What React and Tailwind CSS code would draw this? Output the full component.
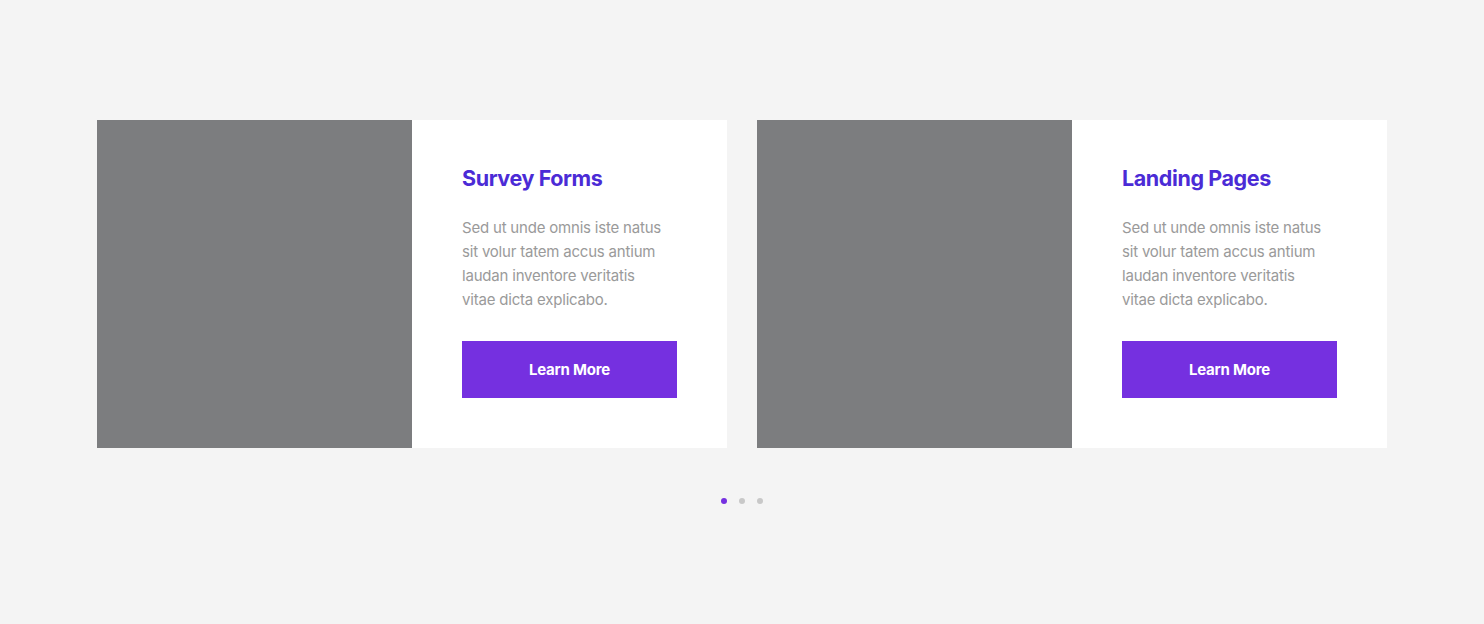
const CARDS = [
  { title: 'Survey Forms' },
  { title: 'Landing Pages' },
];

const BODY = 'Sed ut unde omnis iste natus sit volur tatem accus antium laudan inventore veritatis vitae dicta explicabo.';

function Card({ title }) {
  return (
    <div className="flex w-[630px] h-[328px]">
      <div className="w-[315px] shrink-0 bg-[#7c7d7f]" />
      <div className="flex-1 bg-white pt-[43px] pl-[50px] pr-[50px]">
        <h3 className="text-[21.5px] leading-[30px] font-bold tracking-[-0.4px] text-[#4b2bd6]">{title}</h3>
        <p className="mt-[23px] max-w-[208px] text-[15px] leading-[24px] text-[#9a9a9a] tracking-[-0.2px]">{BODY}</p>
        <button className="mt-[29px] w-[215px] h-[57px] pt-[2px] bg-[#7530e0] text-white text-[15px] font-bold tracking-[-0.2px]">
          Learn More
        </button>
      </div>
    </div>
  );
}

export default function App() {
  return (
    <div className="min-h-[624px] bg-[#f4f4f4] pt-[120px] font-['Inter',sans-serif]">
      <div className="flex justify-center gap-[30px]">
        {CARDS.map((c) => (
          <Card key={c.title} title={c.title} />
        ))}
      </div>
      <div className="mt-[50px] flex justify-center gap-[12px]">
        <span className="w-[6px] h-[6px] rounded-full bg-[#7530e0]" />
        <span className="w-[6px] h-[6px] rounded-full bg-[#c8c8c8]" />
        <span className="w-[6px] h-[6px] rounded-full bg-[#c8c8c8]" />
      </div>
    </div>
  );
}
